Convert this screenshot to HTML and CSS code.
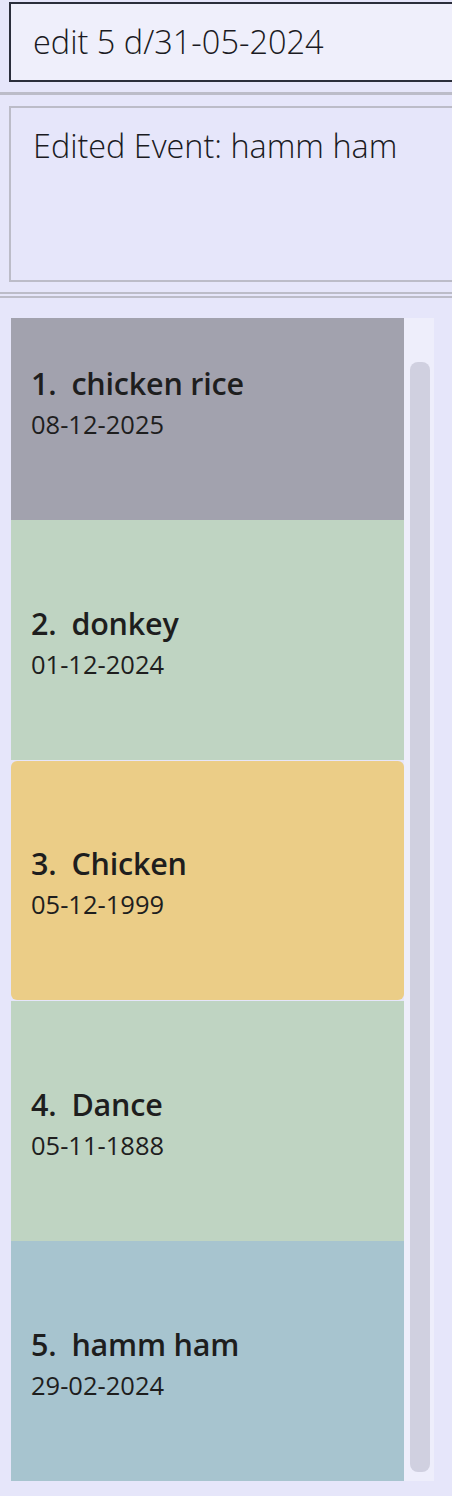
FILE: index.html
```html
<!DOCTYPE html>
<html>
<head>
<meta charset="utf-8">
<link rel="stylesheet" href="styles.css">
</head>
<body>
<div class="app">
  <div class="command">edit 5 d/31-05-2024</div>
  <div class="sep-single"></div>
  <div class="result">Edited Event: hamm ham</div>
  <div class="sep-double"></div>
  <div class="list-pane">
    <div class="list">
      <div class="cell first"><div class="card gray"><div class="title"><span class="num">1.</span><span class="name">chicken rice</span></div><div class="date">08-12-2025</div></div></div>
      <div class="cell"><div class="card green"><div class="title"><span class="num">2.</span><span class="name">donkey</span></div><div class="date">01-12-2024</div></div></div>
      <div class="cell selected"><div class="card yellow"><div class="title"><span class="num">3.</span><span class="name">Chicken</span></div><div class="date">05-12-1999</div></div></div>
      <div class="cell"><div class="card green"><div class="title"><span class="num">4.</span><span class="name">Dance</span></div><div class="date">05-11-1888</div></div></div>
      <div class="cell"><div class="card blue"><div class="title"><span class="num">5.</span><span class="name">hamm ham</span></div><div class="date">29-02-2024</div></div></div>
    </div>
    <div class="scrollbar"><div class="thumb"></div></div>
  </div>
</div>
</body>
</html>
```
FILE: styles.css
```css
html, body {
  margin: 0;
  padding: 0;
  background: #e6e6fa;
  overflow: hidden;
}
.app {
  width: 452px;
  height: 1496px;
  font-family: "Open Sans", "Noto Sans", sans-serif;
  color: #1c1c1c;
  overflow: hidden;
}
.command {
  margin: 2px -20px 0 9px;
  height: 76px;
  border: 2px solid #2b2e3b;
  background: #efeffb;
  box-sizing: content-box;
  font-size: 32.5px;
  font-weight: 300;
  line-height: 76px;
  padding-left: 22px;
  color: #1a1a22;
}
.sep-single {
  margin-top: 10px;
  height: 3px;
  background: #bcbcc8;
}
.result {
  margin: 11px -20px 0 9px;
  border: 2px solid #bcbcc8;
  background: #e6e6fa;
  font-size: 32.4px;
  font-weight: 300;
  line-height: 46px;
  padding: 14px 0 0 22px;
  box-sizing: border-box;
  height: 176px;
  color: #1a1a22;
}
.sep-double {
  margin-top: 10px;
  height: 2px;
  border-top: 2px solid #bcbcc8;
  border-bottom: 2px solid #bcbcc8;
}
.list-pane {
  margin: 20px 0 0 11px;
  width: 423px;
  height: 1163px;
  display: flex;
}
.list {
  width: 393px;
  height: 100%;
  overflow: hidden;
}
.cell {
  height: 240px;
}
.cell.first {
  margin-top: -38px;
}
.cell.selected {
  padding-top: 1px;
  box-sizing: border-box;
  height: 241px;
}
.card {
  height: 100%;
  box-sizing: border-box;
  padding: 83px 0 0 20px;
}
.cell.selected .card {
  height: 239px;
  border-radius: 6px;
  padding-top: 82px;
}
.gray { background: #a2a2ae; }
.green { background: #bfd4c2; }
.yellow { background: #ebcd87; }
.blue { background: #a7c4cf; }
.title {
  font-size: 30.5px;
  font-weight: 600;
  line-height: 40px;
  letter-spacing: -0.2px;
  color: #1e1e1e;
}
.num {
  display: inline-block;
  margin-right: 15px;
}
.date {
  font-size: 25.5px;
  font-weight: 400;
  line-height: 38px;
  margin-top: 2px;
  color: #1e1e1e;
}
.scrollbar {
  width: 30px;
  height: 100%;
  background: #eeeefb;
  box-sizing: border-box;
  padding: 44px 4px 9px 6px;
}
.thumb {
  height: 100%;
  background: #d0d0e0;
  border-radius: 8px;
}
```
